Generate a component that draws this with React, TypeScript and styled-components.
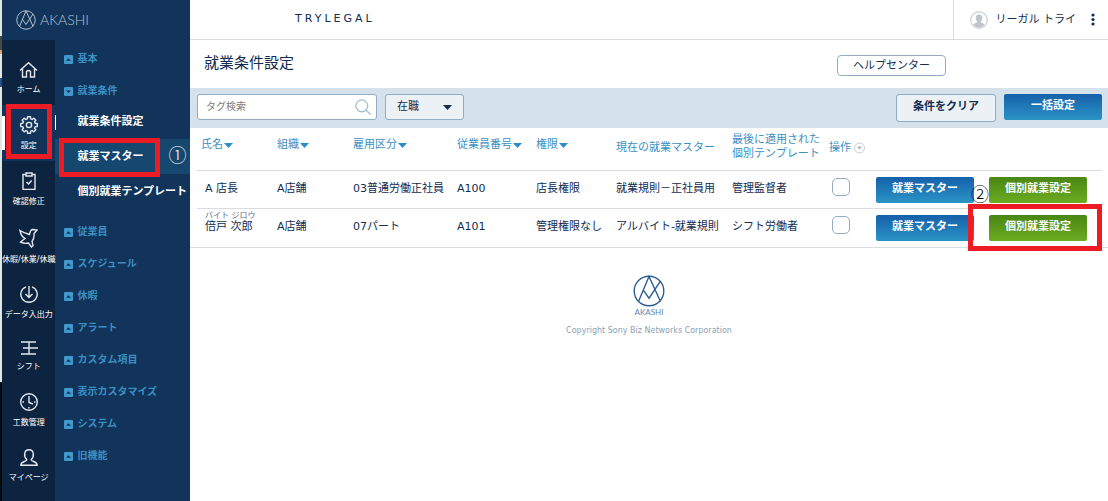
import React from "react";
import styled, { createGlobalStyle, css } from "styled-components";

const navy = "#12345a";
const ink = "#122c52";
const link = "#3a8fc4";
const line = "#d9dcde";
const edge = "#8fadc4";
const red = "#ed1c24";

const GlobalStyle = createGlobalStyle`
  * { box-sizing: border-box; }
  body { margin: 0; background: #fff; }
  body, button, input, select {
    font-family: "DejaVu Sans", "Noto Sans CJK JP", sans-serif;
    font-size: 11px;
    line-height: 14px;
    color: ${ink};
  }
  button { cursor: pointer; }
  ul { list-style: none; margin: 0; padding: 0; }
  a { text-decoration: none; color: inherit; }
  svg { display: block; }
`;

const Page = styled.div`
  display: flex;
  min-height: 100vh;
`;

const WindowEdge = styled.div`
  flex: 0 0 2px;
  background: linear-gradient(#dfe6e4 0 36px, #4a4a44 36px 50px, #c9a86a 50px 54px, #dfe6e4 54px 78px, #25508a 78px 87px, #dfe6e4 87px 382px, #05090d 382px);
`;

const Sidebar = styled.aside`
  flex: 0 0 188px;
  display: flex;
  flex-direction: column;
  background: ${navy};
`;

const Brand = styled.a`
  display: flex;
  align-items: center;
  gap: 4px;
  height: 40px;
  padding-left: 14px;
  color: #b4c2d1;
  font-family: Lato, "Liberation Sans", sans-serif;
  font-size: 14px;
  font-weight: 300;
`;

const Menus = styled.div`
  flex: 1;
  display: flex;
`;

const Rail = styled.nav`
  flex: 0 0 53px;
  padding-top: 9px;
  background: #0d2440;
`;

const RailLink = styled.a<{ $active?: boolean }>`
  position: relative;
  display: flex;
  flex-direction: column;
  align-items: center;
  gap: 7px;
  padding: 11px 0 10px;
  color: #fff;
  font-size: 8px;
  line-height: 10px;
  white-space: nowrap;
  ${(p) => p.$active && css`
    background: ${navy};
    &::before {
      content: "";
      position: absolute;
      left: 0;
      top: 11px;
      width: 3px;
      height: 34px;
      background: #fff;
    }
  `}
`;

const Submenu = styled.nav`
  flex: 1;
`;

const GroupButton = styled.button`
  display: flex;
  align-items: center;
  gap: 4px;
  width: 100%;
  padding: 12px 0 6px 9px;
  border: 0;
  background: none;
  color: ${link};
  font-size: 10px;
  font-weight: 700;
  text-align: left;
`;

const SubList = styled.ul`
  margin-bottom: 4px;
`;

const SubItem = styled.li<{ $shaded?: boolean }>`
  position: relative;
  display: flex;
  align-items: center;
  height: 35px;
  padding-left: 22px;
  background: ${(p) => (p.$shaded ? "#16476f" : "transparent")};
  color: #fff;
  font-weight: 700;
  white-space: nowrap;
`;

const CurrentMark = styled.span`
  position: absolute;
  left: 0;
  top: 11px;
  width: 1px;
  height: 15px;
  background: #fff;
`;

const Main = styled.main`
  flex: 1;
  min-width: 0;
`;

const TopBar = styled.header`
  display: flex;
  justify-content: space-between;
  align-items: center;
  height: 40px;
  padding-left: 105px;
  border-bottom: 1px solid ${line};
`;

const Company = styled.span`
  letter-spacing: 3px;
  padding-bottom: 2px;
`;

const User = styled.div`
  display: flex;
  align-items: center;
  gap: 8px;
  height: 40px;
  padding: 0 13px 0 16px;
  border-left: 1px solid ${line};
`;

const IconButton = styled.button`
  display: flex;
  padding: 0;
  margin-left: 7px;
  border: 0;
  background: none;
`;

const TitleRow = styled.div`
  display: flex;
  justify-content: space-between;
  align-items: center;
  height: 48px;
  padding: 0 162px 0 14px;
`;

const Title = styled.h1`
  margin: 0;
  padding-bottom: 2px;
  font-size: 15px;
  line-height: 20px;
  font-weight: 400;
`;

const HelpLink = styled.a`
  width: 109px;
  padding: 3px 0 2px;
  margin-top: 3px;
  border: 1px solid ${edge};
  border-radius: 4px;
  text-align: center;
`;

const FilterBar = styled.form`
  display: flex;
  align-items: flex-start;
  gap: 8px;
  padding: 6px 6px 6px 7px;
  background: #d5e2eb;
`;

const SearchBox = styled.label`
  display: flex;
  align-items: center;
  width: 180px;
  height: 26px;
  padding: 0 5px 0 8px;
  border: 1px solid ${edge};
  border-radius: 3px;
  background: #fff;
`;

const SearchInput = styled.input`
  flex: 1;
  min-width: 0;
  padding: 0;
  border: 0;
  outline: 0;
  background: none;
  font-size: 10px;
  &::placeholder { color: #7d7d7d; opacity: 1; }
`;

const SelectBox = styled.div`
  display: grid;
  align-items: center;
  width: 79px;
  height: 26px;
  margin-right: auto;
  > * { grid-area: 1 / 1; }
  > svg { justify-self: end; margin-right: 12px; pointer-events: none; }
`;

const Select = styled.select`
  appearance: none;
  width: 100%;
  height: 100%;
  padding: 0 24px 0 11px;
  border: 1px solid ${edge};
  border-radius: 3px;
  background: #ecf1f5;
`;

const ClearButton = styled.button`
  width: 100px;
  height: 28px;
  padding: 0 0 2px;
  border: 1px solid ${edge};
  border-radius: 3px;
  background: #ecf1f5;
  font-weight: 700;
`;

const FillButton = styled.button<{ $tone: "blue" | "green" }>`
  width: 98px;
  height: 26px;
  padding: 0 0 2px;
  border: 0;
  border-radius: 2px;
  color: #fff;
  font-weight: 700;
  background: ${(p) =>
    p.$tone === "blue"
      ? "linear-gradient(#1660aa, #2a94c6)"
      : "linear-gradient(#4a8614, #6cac20)"};
`;

const TableWrap = styled.div`
  padding: 0 6px 0 7px;
  border-bottom: 1px solid ${line};
`;

const Table = styled.table`
  width: 100%;
  table-layout: fixed;
  border-collapse: separate;
  border-spacing: 0;
  white-space: nowrap;
`;

const HeadCell = styled.th<{ $w: number; $top?: number }>`
  width: ${(p) => p.$w}px;
  height: 43px;
  padding: ${(p) => p.$top ?? 10}px 0 0 4px;
  border-bottom: 1px solid ${line};
  color: ${link};
  font-weight: 400;
  text-align: left;
  vertical-align: top;
`;

const SortButton = styled.button`
  display: flex;
  align-items: center;
  gap: 1px;
  padding: 0;
  border: 0;
  background: none;
  color: inherit;
`;

const Row = styled.tr`
  height: 38px;
  &:not(:last-child) > td { border-bottom: 1px solid ${line}; }
`;

const Cell = styled.td<{ $top?: number; $left?: number }>`
  padding: ${(p) => p.$top ?? 11}px 0 0 ${(p) => p.$left ?? 4}px;
  vertical-align: top;
`;

const Kana = styled.span`
  display: block;
  font-size: 8px;
  line-height: 8px;
  color: #5c6b80;
`;

const Check = styled.input`
  appearance: none;
  display: block;
  width: 18px;
  height: 18px;
  margin: 0;
  border: 1px solid ${edge};
  border-radius: 5px;
  background: #fff;
  &:checked { background: ${link}; }
`;

const Actions = styled.div`
  position: relative;
  display: flex;
  gap: 15px;
`;

const Frame = styled.span<{ $x: number; $y: number; $w: number; $h: number }>`
  position: absolute;
  z-index: 1;
  left: ${(p) => p.$x}px;
  top: ${(p) => p.$y}px;
  width: ${(p) => p.$w}px;
  height: ${(p) => p.$h}px;
  border: 5px solid ${red};
  pointer-events: none;
`;

const Step = styled.span<{ $x: number; $y: number; $color: string }>`
  position: absolute;
  z-index: 2;
  left: ${(p) => p.$x}px;
  top: ${(p) => p.$y}px;
  font-family: "Noto Sans CJK JP", sans-serif;
  font-size: 18px;
  line-height: 20px;
  font-weight: 300;
  color: ${(p) => p.$color};
  pointer-events: none;
`;

const Footer = styled.footer`
  display: flex;
  flex-direction: column;
  align-items: center;
  padding-top: 27px;
  color: #2f5f92;
  font-size: 8px;
  line-height: 10px;
`;

const FooterName = styled.span`
  margin-bottom: 9px;
  font-family: Lato, "Liberation Sans", sans-serif;
  color: #5f84a8;
`;

const Copyright = styled.small`
  color: #8ba0b4;
  font-size: 8px;
`;

const Emblem = ({ size, width }: { size: number; width: number }) => (
  <svg width={size} height={size} viewBox="0 0 32 32" fill="none" stroke="currentColor" strokeWidth={width}>
    <circle cx="16" cy="16" r="14.800" />
    <path d="M5.500 26.500 16 1.500l11.500 25M10.300 15.200l5.700 8 11.500-17" />
  </svg>
);

const Toggle = ({ open }: { open?: boolean }) => (
  <svg width="9" height="9" viewBox="0 0 9 9">
    <rect width="9" height="9" rx="1" fill="#3f97cb" />
    <path d={open ? "M2 3.500h5L4.500 6z" : "M2 5.800h5L4.500 3.200z"} fill={navy} />
  </svg>
);

const Caret = ({ color = "#2a8cc8" }: { color?: string }) => (
  <svg width="9" height="5" viewBox="0 0 9 5">
    <path d="M0 0h9L4.500 5z" fill={color} />
  </svg>
);

const gearOutline = Array.from({ length: 8 }, (_, i) => {
  const points: [number, number][] = [[-15, 6.4], [-10, 8.4], [10, 8.4], [15, 6.4]];
  return points
    .map(([offset, radius]) => {
      const angle = ((i * 45 + offset) * Math.PI) / 180;
      return `${(9 + radius * Math.sin(angle)).toFixed(2)},${(9 - radius * Math.cos(angle)).toFixed(2)}`;
    })
    .join(" ");
}).join(" ");

const icons: Record<string, React.ReactNode> = {
  home: (
    <svg width="19" height="18" viewBox="0 0 19 18">
      <path d="M1 10.500 9.500 2.800l8.500 7.700M3.500 8.500V17h4v-5.500q2-2 4 0V17h4V8.500" />
    </svg>
  ),
  gear: (
    <svg width="18" height="18" viewBox="0 0 18 18" strokeLinejoin="round">
      <circle cx="9" cy="9" r="2.600" />
      <polygon points={gearOutline} />
    </svg>
  ),
  clipboard: (
    <svg width="14" height="18" viewBox="0 0 14 18">
      <path d="M4 2.500H1v15h12v-15h-3M4 1h6v3H4zM4.500 10l2 2 3.200-3.500" />
    </svg>
  ),
  bird: (
    <svg width="19" height="20" viewBox="0 0 19 20">
      <path d="M1 2.500c1 5 2.500 7 5 8L1.500 14c3 1.500 6 1.600 8 1l3 4 1.500-1.500-1-4c2-2.500 2.300-5 2-8L18 2l-4-.5c-2 0-3 1.500-3.500 5C7 5.500 4 4.500 1 2.500z" />
    </svg>
  ),
  download: (
    <svg width="18" height="17" viewBox="0 0 18 17">
      <path d="M6 .8a8.200 8 0 1 0 6 0M9 0v11M5.500 8 9 11.500 12.500 8" />
    </svg>
  ),
  shift: (
    <svg width="18" height="14" viewBox="0 0 18 14">
      <path d="M1 1h15M3 7h15M1 13h15M9 1v12" />
    </svg>
  ),
  clock: (
    <svg width="18" height="18" viewBox="0 0 18 18">
      <circle cx="9" cy="9" r="8.300" />
      <path d="M9 3v6.500l4 1.500M2.500 9h1.500M14 9h1.500M9 14v1.500" />
    </svg>
  ),
  person: (
    <svg width="18" height="17" viewBox="0 0 18 17">
      <path d="M6.800 10.500C3.500 7.500 3.800.8 9 .8s5.500 6.700 2.200 9.700c0 2.500 5.800 1.500 6 5.700H.8c.2-4.200 6-3.200 6-5.700z" />
    </svg>
  ),
};

const IconSlot = styled.span`
  stroke: #e3e8ee;
  stroke-width: 1.4;
  fill: none;
`;

const rail = [
  ["home", "ホーム"],
  ["gear", "設定"],
  ["clipboard", "確認修正"],
  ["bird", "休暇/休業/休職"],
  ["download", "データ入出力"],
  ["shift", "シフト"],
  ["clock", "工数管理"],
  ["person", "マイページ"],
];

const laterGroups = ["従業員", "スケジュール", "休暇", "アラート", "カスタム項目", "表示カスタマイズ", "システム", "旧機能"];

const sortable: [string, number][] = [
  ["氏名", 76],
  ["組織", 76],
  ["雇用区分", 104],
  ["従業員番号", 79],
  ["権限", 80],
];

const people = [
  { name: "A 店長", kana: "", cells: ["A店舗", "03普通労働正社員", "A100", "店長権限", "就業規則－正社員用", "管理監督者"] },
  { name: "倍戸 次郎", kana: "バイト ジロウ", cells: ["A店舗", "07パート", "A101", "管理権限なし", "アルバイト-就業規則", "シフト労働者"] },
];

export default function App() {
  return (
    <Page>
      <GlobalStyle />
      <WindowEdge />
      <Sidebar>
        <Brand href="#">
          <Emblem size={20} width={1.6} />
          AKASHI
        </Brand>
        <Menus>
          <Rail>
            {rail.map(([icon, label]) => (
              <RailLink key={icon} href="#" $active={icon === "gear"}>
                <IconSlot>{icons[icon]}</IconSlot>
                {label}
                {icon === "gear" && <Frame $x={4} $y={-1} $w={46} $h={55} />}
              </RailLink>
            ))}
          </Rail>
          <Submenu>
            <GroupButton><Toggle />基本</GroupButton>
            <GroupButton><Toggle open />就業条件</GroupButton>
            <SubList>
              <SubItem><CurrentMark /><a href="#">就業条件設定</a></SubItem>
              <SubItem $shaded>
                <a href="#">就業マスター</a>
                <Frame $x={4} $y={-1} $w={101} $h={39} />
                <Step $x={113} $y={5} $color="#fff">①</Step>
              </SubItem>
              <SubItem><a href="#">個別就業テンプレート</a></SubItem>
            </SubList>
            {laterGroups.map((g) => (
              <GroupButton key={g}><Toggle />{g}</GroupButton>
            ))}
          </Submenu>
        </Menus>
      </Sidebar>
      <Main>
        <TopBar>
          <Company>TRYLEGAL</Company>
          <User>
            <svg width="18" height="18" viewBox="0 0 18 18">
              <circle cx="9" cy="9" r="8.300" fill="#fff" stroke="#cfd5da" strokeWidth="1.400" />
              <path d="M7.300 10.500C4.500 8 5.500 3.500 9 3.500s4.500 4.500 1.700 7c0 1.500 3 1.200 3.800 3.500a7.500 7.500 0 0 1-11 0c.8-2.300 3.800-2 3.800-3.500z" fill="#bcc4cc" />
            </svg>
            <span>リーガル トライ</span>
            <IconButton aria-label="メニュー">
              <svg width="4" height="13" viewBox="0 0 4 13" fill={ink}>
                <circle cx="2" cy="2" r="1.600" />
                <circle cx="2" cy="6.500" r="1.600" />
                <circle cx="2" cy="11" r="1.600" />
              </svg>
            </IconButton>
          </User>
        </TopBar>
        <TitleRow>
          <Title>就業条件設定</Title>
          <HelpLink href="#">ヘルプセンター</HelpLink>
        </TitleRow>
        <FilterBar onSubmit={(e) => e.preventDefault()}>
          <SearchBox>
            <SearchInput type="text" placeholder="タグ検索" aria-label="タグ検索" />
            <svg width="16" height="16" viewBox="0 0 16 16" fill="none" stroke="#a9c0d1" strokeWidth="1.400">
              <circle cx="6.800" cy="6.800" r="5.900" />
              <path d="m11 11 4.500 4.500" />
            </svg>
          </SearchBox>
          <SelectBox>
            <Select aria-label="在職状況" defaultValue="在職">
              <option>在職</option>
              <option>退職</option>
            </Select>
            <Caret color={ink} />
          </SelectBox>
          <ClearButton type="reset">条件をクリア</ClearButton>
          <FillButton type="button" $tone="blue">一括設定</FillButton>
        </FilterBar>
        <TableWrap>
          <Table>
            <thead>
              <tr>
                {sortable.map(([label, w]) => (
                  <HeadCell key={label} $w={w}>
                    <SortButton>{label}<Caret /></SortButton>
                  </HeadCell>
                ))}
                <HeadCell $w={116} $top={13}>現在の就業マスター</HeadCell>
                <HeadCell $w={97} $top={5}>最後に適用された<br />個別テンプレート</HeadCell>
                <HeadCell $w={47} $top={13}>
                  <SortButton>
                    操作
                    <svg width="13" height="12" viewBox="0 0 13 12">
                      <circle cx="7.500" cy="6" r="5" fill="#fff" stroke="#c6cdd6" />
                      <path d="M5 4.500h5L7.500 7.500z" fill="#9fb2c4" />
                    </svg>
                  </SortButton>
                </HeadCell>
                <HeadCell $w={230} aria-label="設定" />
              </tr>
            </thead>
            <tbody>
              {people.map((p, i) => (
                <Row key={p.name}>
                  <Cell $top={p.kana ? 3 : 11} $left={8}>
                    {p.kana && <Kana>{p.kana}</Kana>}
                    {p.name}
                  </Cell>
                  {p.cells.map((c, n) => (
                    <Cell key={n}>{c}</Cell>
                  ))}
                  <Cell $top={7} $left={7}>
                    <Check type="checkbox" aria-label={`${p.name}を選択`} />
                  </Cell>
                  <Cell $top={6}>
                    <Actions>
                      <FillButton $tone="blue">就業マスター</FillButton>
                      <FillButton $tone="green">個別就業設定</FillButton>
                      {i === 0 && <Step $x={95} $y={6} $color="#000">②</Step>}
                      {i === 1 && <Frame $x={92} $y={-11} $w={134} $h={47} />}
                    </Actions>
                  </Cell>
                </Row>
              ))}
            </tbody>
          </Table>
        </TableWrap>
        <Footer>
          <Emblem size={32} width={1.4} />
          <FooterName>AKASHI</FooterName>
          <Copyright>Copyright Sony Biz Networks Corporation</Copyright>
        </Footer>
      </Main>
    </Page>
  );
}
